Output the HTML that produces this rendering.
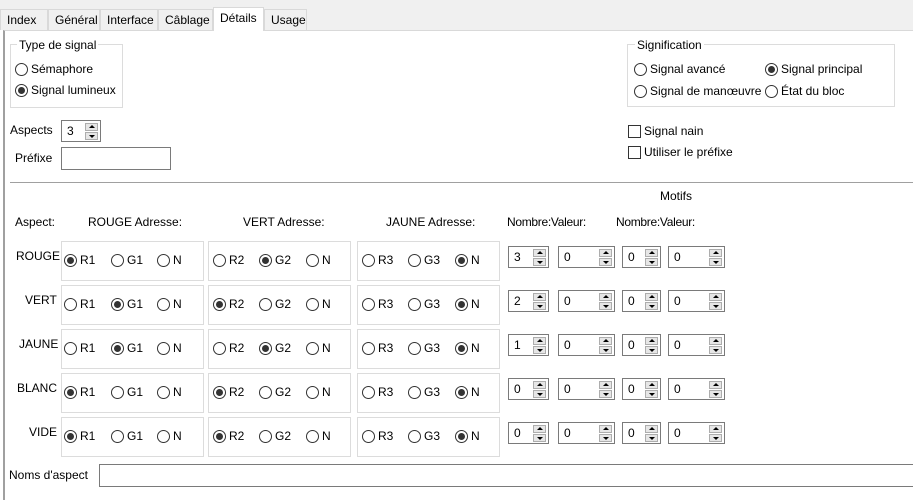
<!DOCTYPE html>
<html><head><meta charset="utf-8"><style>
*{box-sizing:border-box;margin:0;padding:0}
body{width:913px;height:497px;overflow:hidden;background:#fff;font-family:"Liberation Sans",sans-serif;font-size:12px;color:#000;position:relative}
.a{position:absolute;white-space:nowrap}
.tabbar{position:absolute;left:0;top:0;width:913px;height:30px;background:#f0f0f0}
.tab{position:absolute;top:9px;height:21px;border:1px solid #d9d9d9;border-bottom:none;background:#f0f0f0;padding:3px 0 0 6px}
.tab.s{top:7px;height:24px;background:#fff;border-color:#d9d9d9;z-index:2}
.panel{position:absolute;left:3px;top:30px;width:912px;height:470px;border-left:2px solid #a0a0a0;border-top:1px solid #d9d9d9;background:#fff}
.grp{position:absolute;border:1px solid #dcdcdc}
.gl{position:absolute;background:#fff;padding:0 2px}
.rl{position:absolute;white-space:nowrap;line-height:14px}
.rl i{display:inline-block;width:13px;height:13px;border:1px solid #333;border-radius:50%;vertical-align:-3px;margin-right:3px;position:relative;background:#fff}
.rl i.c:after{content:"";position:absolute;left:2px;top:2px;width:7px;height:7px;border-radius:50%;background:#333}
.cb{display:inline-block;width:13px;height:13px;border:1px solid #333;vertical-align:-3px;margin-right:3px}
.box{position:absolute;width:143px;height:40px;border:1px solid #dcdcdc}
.sp{position:absolute;height:22px;border:1px solid #7a7a7a;background:#fff;padding:3px 0 0 5px}
.sp b{position:absolute;right:2px;width:13px;height:8px;background:#e6e6e6;border:1px solid #adadad;font-size:0}
.sp b.u{top:2px}.sp b.d{top:11px}
.sp b:after{content:"";position:absolute;left:3px;border-left:3px solid transparent;border-right:3px solid transparent}
.sp b.u:after{top:1px;border-bottom:3px solid #000}
.sp b.d:after{top:2px;border-top:3px solid #000}
.in{position:absolute;border:1px solid #7a7a7a;background:#fff}
</style></head><body>
<div class="tabbar"></div>
<div class="tab" style="left:0;width:48px">Index</div>
<div class="tab" style="left:48px;width:52px">Général</div>
<div class="tab" style="left:100px;width:58px">Interface</div>
<div class="tab" style="left:158px;width:55px">Câblage</div>
<div class="tab s" style="left:213px;width:51px">Détails</div>
<div class="tab" style="left:264px;width:43px">Usage</div>
<div class="panel"></div>

<div class="grp" style="left:10px;top:44px;width:113px;height:64px"></div>
<div class="gl a" style="left:17px;top:38px">Type de signal</div>
<div class="rl" style="left:15px;top:62px"><i></i>Sémaphore</div>
<div class="rl" style="left:15px;top:83px"><i class="c"></i>Signal lumineux</div>

<div class="a" style="left:10px;top:123px">Aspects</div>
<div class="sp" style="left:61px;top:120px;width:40px">3<b class="u"></b><b class="d"></b></div>
<div class="a" style="left:15px;top:151px">Préfixe</div>
<div class="in" style="left:61px;top:147px;width:110px;height:23px"></div>

<div class="grp" style="left:627px;top:44px;width:268px;height:63px"></div>
<div class="gl a" style="left:635px;top:38px">Signification</div>
<div class="rl" style="left:634px;top:62px"><i></i>Signal avancé</div>
<div class="rl" style="left:765px;top:62px"><i class="c"></i>Signal principal</div>
<div class="rl" style="left:634px;top:84px"><i></i>Signal de manœuvre</div>
<div class="rl" style="left:765px;top:84px"><i></i>État du bloc</div>
<div class="rl" style="left:628px;top:124px"><span class="cb"></span>Signal nain</div>
<div class="rl" style="left:628px;top:145px"><span class="cb"></span>Utiliser le préfixe</div>

<div class="a" style="left:10px;top:182px;width:903px;height:1px;background:#a0a0a0"></div>
<div class="a" style="left:660px;top:189px">Motifs</div>
<div class="a" style="left:15px;top:215px">Aspect:</div>
<div class="a" style="left:88px;top:215px">ROUGE Adresse:</div>
<div class="a" style="left:243px;top:215px">VERT Adresse:</div>
<div class="a" style="left:386px;top:215px">JAUNE Adresse:</div>
<div class="a" style="left:507px;top:215px;letter-spacing:-0.3px">Nombre:Valeur:</div>
<div class="a" style="left:616px;top:215px;letter-spacing:-0.3px">Nombre:Valeur:</div>

<div class="a" style="left:16px;top:249px">ROUGE</div>
<div class="box" style="left:61px;top:241px"></div><div class="box" style="left:208px;top:241px"></div><div class="box" style="left:357px;top:241px"></div>
<div class="rl" style="left:64px;top:253px"><i class="c"></i>R1</div><div class="rl" style="left:111px;top:253px"><i></i>G1</div><div class="rl" style="left:157px;top:253px"><i></i>N</div>
<div class="rl" style="left:213px;top:253px"><i></i>R2</div><div class="rl" style="left:259px;top:253px"><i class="c"></i>G2</div><div class="rl" style="left:306px;top:253px"><i></i>N</div>
<div class="rl" style="left:362px;top:253px"><i></i>R3</div><div class="rl" style="left:408px;top:253px"><i></i>G3</div><div class="rl" style="left:455px;top:253px"><i class="c"></i>N</div>
<div class="sp" style="left:508px;top:246px;width:41px">3<b class="u"></b><b class="d"></b></div>
<div class="sp" style="left:558px;top:246px;width:57px">0<b class="u"></b><b class="d"></b></div>
<div class="sp" style="left:622px;top:246px;width:39px">0<b class="u"></b><b class="d"></b></div>
<div class="sp" style="left:668px;top:246px;width:57px">0<b class="u"></b><b class="d"></b></div>

<div class="a" style="left:25px;top:293px">VERT</div>
<div class="box" style="left:61px;top:285px"></div><div class="box" style="left:208px;top:285px"></div><div class="box" style="left:357px;top:285px"></div>
<div class="rl" style="left:64px;top:297px"><i></i>R1</div><div class="rl" style="left:111px;top:297px"><i class="c"></i>G1</div><div class="rl" style="left:157px;top:297px"><i></i>N</div>
<div class="rl" style="left:213px;top:297px"><i class="c"></i>R2</div><div class="rl" style="left:259px;top:297px"><i></i>G2</div><div class="rl" style="left:306px;top:297px"><i></i>N</div>
<div class="rl" style="left:362px;top:297px"><i></i>R3</div><div class="rl" style="left:408px;top:297px"><i></i>G3</div><div class="rl" style="left:455px;top:297px"><i class="c"></i>N</div>
<div class="sp" style="left:508px;top:290px;width:41px">2<b class="u"></b><b class="d"></b></div>
<div class="sp" style="left:558px;top:290px;width:57px">0<b class="u"></b><b class="d"></b></div>
<div class="sp" style="left:622px;top:290px;width:39px">0<b class="u"></b><b class="d"></b></div>
<div class="sp" style="left:668px;top:290px;width:57px">0<b class="u"></b><b class="d"></b></div>

<div class="a" style="left:19px;top:337px">JAUNE</div>
<div class="box" style="left:61px;top:329px"></div><div class="box" style="left:208px;top:329px"></div><div class="box" style="left:357px;top:329px"></div>
<div class="rl" style="left:64px;top:341px"><i></i>R1</div><div class="rl" style="left:111px;top:341px"><i class="c"></i>G1</div><div class="rl" style="left:157px;top:341px"><i></i>N</div>
<div class="rl" style="left:213px;top:341px"><i></i>R2</div><div class="rl" style="left:259px;top:341px"><i class="c"></i>G2</div><div class="rl" style="left:306px;top:341px"><i></i>N</div>
<div class="rl" style="left:362px;top:341px"><i></i>R3</div><div class="rl" style="left:408px;top:341px"><i></i>G3</div><div class="rl" style="left:455px;top:341px"><i class="c"></i>N</div>
<div class="sp" style="left:508px;top:334px;width:41px">1<b class="u"></b><b class="d"></b></div>
<div class="sp" style="left:558px;top:334px;width:57px">0<b class="u"></b><b class="d"></b></div>
<div class="sp" style="left:622px;top:334px;width:39px">0<b class="u"></b><b class="d"></b></div>
<div class="sp" style="left:668px;top:334px;width:57px">0<b class="u"></b><b class="d"></b></div>

<div class="a" style="left:17px;top:381px">BLANC</div>
<div class="box" style="left:61px;top:373px"></div><div class="box" style="left:208px;top:373px"></div><div class="box" style="left:357px;top:373px"></div>
<div class="rl" style="left:64px;top:385px"><i class="c"></i>R1</div><div class="rl" style="left:111px;top:385px"><i></i>G1</div><div class="rl" style="left:157px;top:385px"><i></i>N</div>
<div class="rl" style="left:213px;top:385px"><i class="c"></i>R2</div><div class="rl" style="left:259px;top:385px"><i></i>G2</div><div class="rl" style="left:306px;top:385px"><i></i>N</div>
<div class="rl" style="left:362px;top:385px"><i></i>R3</div><div class="rl" style="left:408px;top:385px"><i></i>G3</div><div class="rl" style="left:455px;top:385px"><i class="c"></i>N</div>
<div class="sp" style="left:508px;top:378px;width:41px">0<b class="u"></b><b class="d"></b></div>
<div class="sp" style="left:558px;top:378px;width:57px">0<b class="u"></b><b class="d"></b></div>
<div class="sp" style="left:622px;top:378px;width:39px">0<b class="u"></b><b class="d"></b></div>
<div class="sp" style="left:668px;top:378px;width:57px">0<b class="u"></b><b class="d"></b></div>

<div class="a" style="left:29px;top:425px">VIDE</div>
<div class="box" style="left:61px;top:417px"></div><div class="box" style="left:208px;top:417px"></div><div class="box" style="left:357px;top:417px"></div>
<div class="rl" style="left:64px;top:429px"><i class="c"></i>R1</div><div class="rl" style="left:111px;top:429px"><i></i>G1</div><div class="rl" style="left:157px;top:429px"><i></i>N</div>
<div class="rl" style="left:213px;top:429px"><i class="c"></i>R2</div><div class="rl" style="left:259px;top:429px"><i></i>G2</div><div class="rl" style="left:306px;top:429px"><i></i>N</div>
<div class="rl" style="left:362px;top:429px"><i></i>R3</div><div class="rl" style="left:408px;top:429px"><i></i>G3</div><div class="rl" style="left:455px;top:429px"><i class="c"></i>N</div>
<div class="sp" style="left:508px;top:422px;width:41px">0<b class="u"></b><b class="d"></b></div>
<div class="sp" style="left:558px;top:422px;width:57px">0<b class="u"></b><b class="d"></b></div>
<div class="sp" style="left:622px;top:422px;width:39px">0<b class="u"></b><b class="d"></b></div>
<div class="sp" style="left:668px;top:422px;width:57px">0<b class="u"></b><b class="d"></b></div>

<div class="a" style="left:9px;top:468px">Noms d'aspect</div>
<div class="in" style="left:99px;top:464px;width:820px;height:23px"></div>
</body></html>
